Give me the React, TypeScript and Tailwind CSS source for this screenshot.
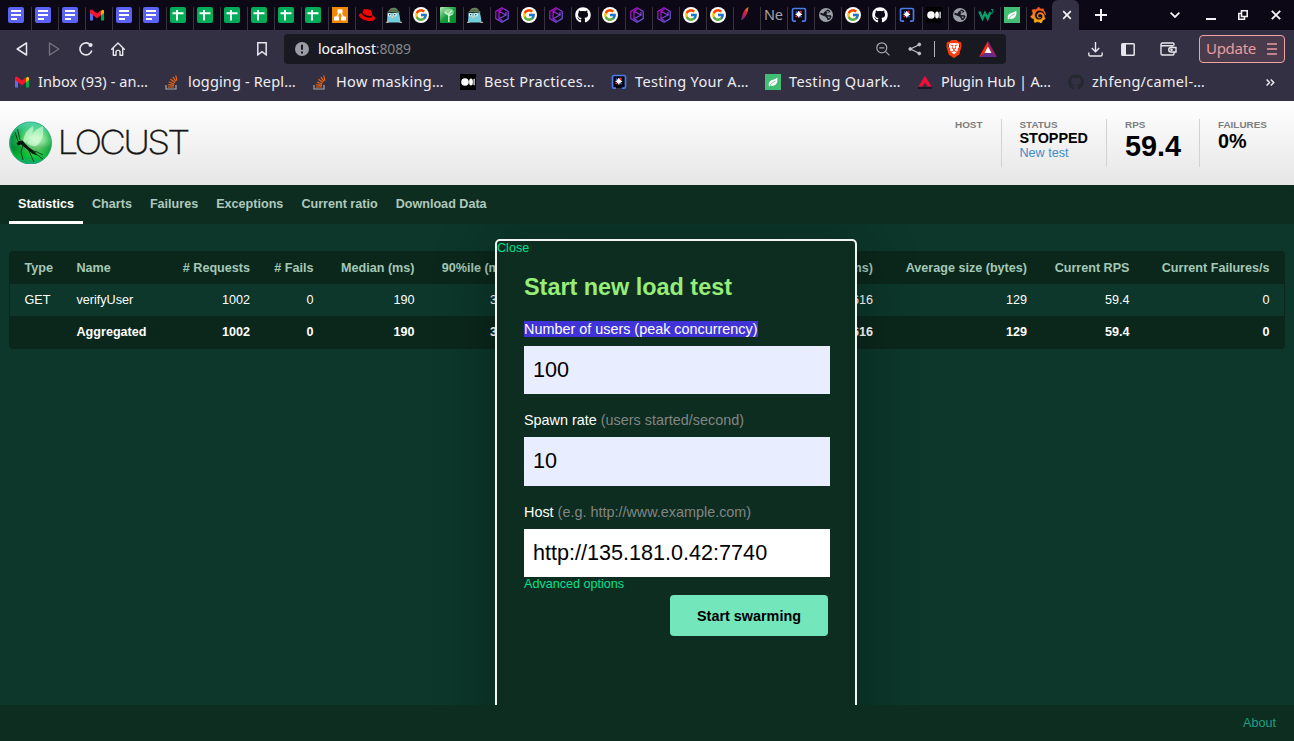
import type { ReactNode } from "react";
import { FaRedhat, FaGithub } from "react-icons/fa";
import { FcGoogle } from "react-icons/fc";
import { SiBrave, SiGrafana } from "react-icons/si";

/* ---------- favicons ---------- */

const Docs = () => (
  <svg width="16" height="16" viewBox="0 0 16 16">
    <rect width="16" height="16" rx="2" fill="#5b62f4" />
    <path d="M3 4h10M3 8h10M3 12h6" stroke="#fff" strokeWidth="1.8" />
  </svg>
);

const Sheets = () => (
  <svg width="16" height="16" viewBox="0 0 16 16">
    <rect width="16" height="16" rx="2" fill="#00ac57" />
    <path d="M2.5 6.2h11M7 3v10.5" stroke="#fff" strokeWidth="1.9" />
  </svg>
);

const Gmail = () => (
  <svg width="16" height="16" viewBox="0 0 16 16">
    <path d="M1 5v8.5h3V7.5z" fill="#5b6cf0" />
    <path d="M15 5v8.5h-3V7.5z" fill="#00ac47" />
    <path d="M12 4l1.5-1.2L15 3.5V6l-3 2.3z" fill="#ffba00" />
    <path d="M1 6V3.6Q2.2 1.8 4 3.2l4 3.4 4-3.4v5L8 11.2 4 8.2z" fill="#f5152f" />
  </svg>
);

const DrawIo = () => (
  <svg width="16" height="16" viewBox="0 0 16 16">
    <rect width="16" height="16" fill="#f08705" />
    <path d="M8 4L4.3 11M8 4l3.7 7" stroke="#fff" strokeWidth="1.3" />
    <rect x="5.5" y="2.3" width="5" height="4" rx=".6" fill="#fff" />
    <rect x="2" y="9.5" width="5" height="4" rx=".6" fill="#fff" />
    <rect x="9" y="9.5" width="5" height="4" rx=".6" fill="#fff" />
  </svg>
);

const Gopher = () => (
  <svg width="16" height="16" viewBox="0 0 16 16">
    <path d="M1.500 6h11.500l.8 4 .7 5.500H1z" fill="#74cddd" />
    <path d="M.5 5.500Q3 4.800 3.800 2 6 .2 9 .8q2.500.4 3 2.700l1.500 1.200-.3 1.600Q8 4.800.5 5.500z" fill="#65805a" />
    <path d="M4 3.800q4-1.200 8 .4" stroke="#3c5238" strokeWidth=".7" fill="none" />
    <circle cx="3.500" cy="7.700" r="1.700" fill="#e8fbff" />
    <circle cx="9" cy="7.700" r="1.800" fill="#e8fbff" />
    <circle cx="3.700" cy="7.800" r=".7" fill="#172226" />
    <circle cx="8.800" cy="7.800" r=".7" fill="#172226" />
    <path d="M5.300 9h2v2h-2z" fill="#e3cba6" />
    <path d="M0 15.300h2.500M13.500 15.300H16" stroke="#e3cba6" />
  </svg>
);

const Google = () => (
  <span className="flex size-4 items-center justify-center rounded-full bg-white">
    <FcGoogle size={14} />
  </span>
);

const GreenTree = () => (
  <svg width="16" height="16" viewBox="0 0 16 16">
    <defs>
      <linearGradient id="treeBg" x2="1" y2="1">
        <stop offset="0" stopColor="#b5eeb8" />
        <stop offset=".5" stopColor="#159d3f" />
        <stop offset="1" stopColor="#008c24" />
      </linearGradient>
    </defs>
    <rect width="16" height="16" rx="1" fill="url(#treeBg)" />
    <path d="M8.800 15V7M8.500 8L5 5M8.500 7l3.500-3.500M8.500 9l4-2" stroke="#e4fbe2" strokeWidth="1.300" />
    <ellipse cx="9" cy="5" rx="5" ry="3.200" fill="#c0efc0" opacity=".6" />
  </svg>
);

const PurpleHex = () => (
  <svg width="16" height="16" viewBox="0 0 16 16" fill="none" strokeWidth="1.2">
    <defs>
      <linearGradient id="hexStroke" x2="1" y2="1">
        <stop offset="0" stopColor="#b900c8" />
        <stop offset="1" stopColor="#5b68e8" />
      </linearGradient>
    </defs>
    <g stroke="url(#hexStroke)">
      <path d="M8 .8l6.200 3.600v7.200L8 15.200 1.800 11.600V4.400z" />
      <path d="M5 4.300L12 8l-7 3.700zM5 4.300L8.500 2.300M12 8V5M5 11.700l3.500 2" />
    </g>
  </svg>
);

const Feather = () => (
  <svg width="16" height="16" viewBox="0 0 16 16">
    <defs>
      <linearGradient id="quill" x1="1" y1="0" x2="0" y2="1">
        <stop offset="0" stopColor="#f79a23" />
        <stop offset=".4" stopColor="#e2223e" />
        <stop offset="1" stopColor="#5c2a86" />
      </linearGradient>
    </defs>
    <path d="M11.500 0Q8 1.500 6 6L4 13l1 0Q10.500 9 11.500 0z" fill="url(#quill)" />
  </svg>
);

const Bracket = () => (
  <svg width="16" height="16" viewBox="0 0 16 16">
    <rect x="2" y="2" width="12" height="12" fill="#08070d" />
    <path d="M5 14.200H2.800Q1.500 14.200 1.500 12.500V3Q1.500 1.500 3 1.500h10q1.500 0 1.500 1.500v9.500q0 1.700-1.300 1.700H11" fill="none" stroke="#4a7be8" strokeWidth="1.700" />
    <circle cx="7.800" cy="7.300" r="2.300" fill="#fff" />
    <path d="M7.800 4v6.600M4.500 7.300h6.600" stroke="#fff" strokeWidth="1.200" />
    <path d="M9 4.200l1.500 1.500M4.700 9.800l1.300-1" stroke="#f03058" strokeWidth="1.700" />
    <path d="M5 4.500l1.200 1.200M9.500 9.300l1 1" stroke="#4177ea" strokeWidth="1.300" />
  </svg>
);

const Globe = () => (
  <svg width="16" height="16" viewBox="0 0 16 16">
    <circle cx="8" cy="8" r="7" fill="#9aa0a6" />
    <path d="M9.500 2.400q2 .6 3 2.200-1.500 1.600-2.700 1.400-1 .3-1.500 1.500l1.500.8 2.500-.4 1.300 1.500q-.8 2.300-2.600 3.500Q9 13.500 9 11.500 8 9.300 5.800 9L2.300 7.600l.3-1.800 3 .8Q6 4.500 9.500 2.400z" fill="#191724" />
    <path d="M8.300 4.500l2-.5.500 1.300-1.500.8zM9.500 9.500l2.300.3-.8 2z" fill="#9aa0a6" />
  </svg>
);

const Medium = () => (
  <svg width="16" height="16" viewBox="0 0 16 16">
    <rect width="16" height="16" fill="#000" />
    <circle cx="5" cy="8" r="3.800" fill="#fff" />
    <ellipse cx="11" cy="8" rx="1.900" ry="3.600" fill="#fff" />
    <rect x="13.500" y="4.800" width="1.200" height="6.400" fill="#fff" />
  </svg>
);

const W3 = () => (
  <svg width="16" height="16" viewBox="0 0 16 16" fill="none" stroke="#04a06a">
    <path d="M1.300 4.500l3.200 7 2.500-5.500 2.700 5.500 2.700-6.500" strokeWidth="2.400" />
    <path d="M13 2.500h2.200l-1.100 1.700q1.400.1 1.100 1.300-.5 1-2.200.5" strokeWidth=".9" />
  </svg>
);

const Leaf = () => (
  <svg width="16" height="16" viewBox="0 0 16 16">
    <rect width="16" height="16" fill="#42bd74" />
    <path d="M12.300 3.500Q13.300 10.500 8.500 11.800q-2 .3-3-.6l-.9 1.300-.8-.5Q3 7 7.500 5.900q3-.4 4.800-2.400z" fill="#fff" />
    <path d="M5 11.200Q7 8.300 10.500 7" stroke="#42bd74" strokeWidth=".7" fill="none" />
  </svg>
);

const Grafana = () => (
  <span className="block size-4">
    <svg width="0" height="0" className="absolute">
      <linearGradient id="grafanaFill" x2="0" y2="1">
        <stop offset="0" stopColor="#f04a28" />
        <stop offset="1" stopColor="#fcb913" />
      </linearGradient>
    </svg>
    <SiGrafana size={16} fill="url(#grafanaFill)" stroke="url(#grafanaFill)" strokeWidth="0.900" />
  </span>
);

const Stack = () => (
  <svg width="16" height="16" viewBox="0 0 16 16" fill="none">
    <path d="M2 11v4h10v-4" stroke="#a9a9ac" strokeWidth="1.200" />
    <path d="M4 13h6M4.200 10.700l5.800.7M4.800 8l5.500 2M6.400 5.300l4.600 3.300M8.900 3l3 4.300M11.800 1.500l1 5.200" stroke="#f2670c" strokeWidth="1.200" />
  </svg>
);

const Bat = () => (
  <svg width="18" height="16" viewBox="0 0 18 16">
    <path d="M9 0L0 16l9-5.500z" fill="#ff2a08" />
    <path d="M9 0l9 16-9-5.500z" fill="#9e1f63" />
    <path d="M0 16h18l-9-6z" fill="#662d91" />
    <path d="M9 5.500l3.500 6.500h-7z" fill="#fff" />
  </svg>
);

const RedTriangle = () => (
  <svg width="16" height="16" viewBox="0 0 16 16">
    <path d="M8 1.800L1.500 12.500h4L8 8.500l2.500 4h4z" fill="#f50d35" />
    <path d="M1 14h14" stroke="#171520" strokeWidth="1.600" />
  </svg>
);

const RedHat = () => <FaRedhat size={16} color="#f00500" />;
const GitHubLight = () => <FaGithub size={16} color="#fff" />;
const GitHubDark = () => <FaGithub size={16} color="#24292f" />;
const NeText = () => (
  <span className="-mt-px block w-[22px] shrink-0 text-[14.500px] leading-4 tracking-[-0.3px] text-[#a5a3ad]">Ne</span>
);

const tabs: (() => ReactNode)[] = [
  Docs, Docs, Docs, Gmail, Docs, Docs,
  Sheets, Sheets, Sheets, Sheets, Sheets, Sheets,
  DrawIo, RedHat, Gopher, Google, GreenTree, Gopher, PurpleHex, Google,
  PurpleHex, GitHubLight, Google, PurpleHex, PurpleHex, Google, Google, Feather,
  NeText, Bracket, Globe, Google, GitHubLight, Bracket,
];
const narrowTabs: (() => ReactNode)[] = [Medium, Globe, W3, Leaf, Grafana];

function TabStrip() {
  return (
    <div className="flex h-[30px] bg-[#0c0815] pl-[5px]">
      {tabs.map((Icon, i) => (
        <div key={i} className="flex h-[30px] w-[27px] shrink-0 items-end">
          <div className="flex h-[23px] w-[27px] justify-start border-r border-[#36333c] pl-[3px]"><Icon /></div>
        </div>
      ))}
      {narrowTabs.map((Icon, i) => (
        <div key={i} className="flex h-[30px] w-[26px] shrink-0 items-end">
          <div className={i === 4 ? "flex h-[23px] w-[26px] pl-[3px]" : "flex h-[23px] w-[26px] border-r border-[#36333c] pl-[3px]"}><Icon /></div>
        </div>
      ))}
      <div className="-ml-px flex h-[30px] w-[27px] shrink-0 items-center justify-center rounded-t-md bg-[#343043] pl-0.5">
        <svg width="10" height="10" viewBox="0 0 10 10" stroke="#f3f2f6" strokeWidth="1.700"><path d="M1.200 1.200l7.600 7.600M8.800 1.200L1.200 8.800" /></svg>
      </div>
      <div className="flex flex-1 items-center text-[#f3f2f6]">
        <svg className="ml-4" width="12" height="12" viewBox="0 0 12 12" stroke="currentColor" strokeWidth="2"><path d="M6 0v12M0 6h12" /></svg>
        <svg className="ml-[63px]" width="10" height="6" viewBox="0 0 10 6" fill="none" stroke="currentColor" strokeWidth="1.800"><path d="M.6.700L5 5 9.400.7" /></svg>
        <svg className="mt-2 ml-[26px]" width="10" height="2"><rect width="10" height="2" fill="currentColor" /></svg>
        <svg className="ml-[22px]" width="10" height="10" viewBox="0 0 10 10" fill="none" stroke="currentColor" strokeWidth="1.600"><path d="M3.500.8h5.700v5.700H3.500zM3 3.500H.8v5.700h5.700V7" /></svg>
        <svg className="ml-[23px]" width="10" height="10" viewBox="0 0 10 10" stroke="currentColor" strokeWidth="1.900"><path d="M.8.8l8.400 8.400M9.200.8L.8 9.200" /></svg>
      </div>
    </div>
  );
}

function Toolbar() {
  return (
    <div className="flex h-[38px] items-center text-[#e8e6ed]">
      <svg className="ml-4" width="12" height="14" viewBox="0 0 12 14" fill="none" stroke="currentColor" strokeWidth="1.500" strokeLinejoin="round"><path d="M10.500 1v12L1.200 7z" /></svg>
      <svg className="ml-5" width="12" height="14" viewBox="0 0 12 14" fill="none" stroke="#77747f" strokeWidth="1.300" strokeLinejoin="round"><path d="M1.500 1v12L10.800 7z" /></svg>
      <svg className="ml-[19px]" width="14" height="14" viewBox="0 0 14 14" fill="none" stroke="currentColor" strokeWidth="1.600"><path d="M10 1.700A6 6 0 1 0 12.800 8.500" /><circle cx="11.500" cy="3" r="2.100" fill="currentColor" stroke="none" /></svg>
      <svg className="ml-[18px]" width="14" height="14" viewBox="0 0 14 14" fill="none" stroke="currentColor" strokeWidth="1.400" strokeLinejoin="round" strokeLinecap="round"><path d="M.7 7.200L7 1l6.300 6.200M2.300 6v7.200H5V9.500q2-2.800 4 0v3.700h2.700V6" /></svg>
      <svg className="ml-[132px]" width="10" height="14" viewBox="0 0 10 14" fill="none" stroke="currentColor" strokeWidth="1.500"><path d="M.8.800h8.400v12L5 9.700.8 12.800z" /></svg>
      <div className="ml-[17px] flex h-[30px] w-[722px] items-center rounded-[4px] bg-[#191a21]">
        <svg className="ml-[11px]" width="14" height="14" viewBox="0 0 14 14"><circle cx="7" cy="7" r="7" fill="#9a9da5" /><path d="M7 2.800v5M7 9.500v2" stroke="#191a21" strokeWidth="2" /></svg>
        <span className="ml-[9px] text-[14px] leading-5 tracking-[-0.15px] text-white">localhost<span className="text-[#85868d]">:8089</span></span>
        <svg className="ml-auto" width="14" height="14" viewBox="0 0 14 14" fill="none" stroke="#aaa9b0" strokeWidth="1.200"><circle cx="5.800" cy="5.800" r="5" /><path d="M9.400 9.400l4 4M3.300 5.800h5" /></svg>
        <svg className="ml-[18px]" width="14" height="14" viewBox="0 0 14 14" fill="#c4c3c9" stroke="#c4c3c9"><path d="M11.500 2.500L2.500 7l9 4.500" fill="none" strokeWidth="1.200" /><circle cx="11.300" cy="2.500" r="1.400" /><circle cx="2.300" cy="7" r="1.400" /><circle cx="11.300" cy="11.500" r="1.400" /></svg>
        <div className="ml-3 h-4 w-px bg-[#b4b3ba]" />
        <span className="relative ml-[10px] flex h-[18px] w-[18px] items-center justify-center">
          <span className="absolute h-[12px] w-[10px] bg-white" />
          <SiBrave className="relative" size={18} color="#fb3b0b" />
        </span>
        <span className="mr-[9px] ml-[16px]"><Bat /></span>
      </div>
      <svg className="ml-[82px]" width="15" height="15" viewBox="0 0 15 15" fill="none" stroke="currentColor" strokeWidth="1.400"><path d="M7.500 0v9.500M3.800 6l3.700 3.700L11.200 6M.8 10.500v2q0 1.500 1.500 1.500h10.400q1.500 0 1.500-1.500v-2" /></svg>
      <svg className="ml-[18px]" width="14" height="13" viewBox="0 0 14 13"><rect x=".8" y=".8" width="12.400" height="11.400" rx=".8" fill="none" stroke="currentColor" strokeWidth="1.500" /><rect x="1" y="1" width="4" height="11" fill="currentColor" /></svg>
      <svg className="ml-[25px]" width="17" height="14" viewBox="0 0 17 14" fill="none" stroke="currentColor" strokeWidth="1.400"><path d="M14 3.500V2.300Q14 1 12.700 1H2.500Q1 1 1 2.500v9Q1 13 2.500 13h10.200q1.300 0 1.300-1.300V10.500M1 3.800h12.500M16 5.500v4.500h-5q-2.300 0-2.300-2.200T11 5.500z" /><circle cx="11.500" cy="7.800" r=".6" /></svg>
      <div className="ml-[22px] flex h-[28px] w-[86px] items-center rounded-[4px] border border-[#f2a3a5] bg-[#493b4c] pl-[6px] text-[#e99c9f]">
        <span className="w-[53px] pb-0.5 text-[15px] leading-5 tracking-[-0.3px]">Update</span>
        <svg className="ml-2" width="10" height="12" viewBox="0 0 10 12" stroke="currentColor" strokeWidth="1.500"><path d="M0 1h10M0 6h10M0 11h10" /></svg>
      </div>
    </div>
  );
}

const bookmarks: { icon: () => ReactNode; label: string; width: string; spacing: string }[] = [
  { icon: Gmail, label: "Inbox (93) - an…", width: "w-[150px]", spacing: "tracking-[0.08px]" },
  { icon: Stack, label: "logging - Repl…", width: "w-[148px]", spacing: "tracking-[0.15px]" },
  { icon: Stack, label: "How masking…", width: "w-[148px]", spacing: "tracking-[0.33px]" },
  { icon: Medium, label: "Best Practices…", width: "w-[151px]", spacing: "tracking-[0.35px]" },
  { icon: Bracket, label: "Testing Your A…", width: "w-[154px]", spacing: "tracking-[0.35px]" },
  { icon: Leaf, label: "Testing Quark…", width: "w-[152px]", spacing: "tracking-[0.38px]" },
  { icon: RedTriangle, label: "Plugin Hub | A…", width: "w-[151px]", spacing: "tracking-[-0.12px]" },
  { icon: GitHubDark, label: "zhfeng/camel-…", width: "w-[150px]", spacing: "tracking-[0.3px]" },
];

function Bookmarks() {
  return (
    <div className="flex h-[33px] items-center pb-[5px] pl-[14px] text-[#eeedf2]">
      {bookmarks.map(({ icon: Icon, label, width, spacing }) => (
        <div key={label} className={`flex shrink-0 items-center gap-2 ${width}`}>
          <Icon />
          <span className={`-mt-[3px] text-[14.5px] leading-5 whitespace-nowrap ${spacing}`}>{label}</span>
        </div>
      ))}
      <svg className="ml-[48px]" width="9" height="7" viewBox="0 0 9 7" fill="none" stroke="currentColor" strokeWidth="1.500"><path d="M.6.500L3.500 3.500.6 6.500M4.800.5l2.900 3-2.900 3" /></svg>
    </div>
  );
}

/* ---------- Locust page ---------- */

function Logo() {
  return (
    <svg width="184" height="46" viewBox="0 0 184 46">
      <defs>
        <radialGradient id="orb" cx=".62" cy=".45" r=".68">
          <stop offset="0" stopColor="#e8fbe2" />
          <stop offset=".3" stopColor="#8be596" />
          <stop offset=".62" stopColor="#0fb03f" />
          <stop offset=".85" stopColor="#058f43" />
          <stop offset="1" stopColor="#45cdb2" />
        </radialGradient>
        <linearGradient id="orbShade" x2="0" y2="1">
          <stop offset="0" stopColor="#60dfc4" stopOpacity=".85" />
          <stop offset=".35" stopColor="#60dfc4" stopOpacity="0" />
          <stop offset=".6" stopColor="#047b12" stopOpacity=".35" />
          <stop offset=".8" stopColor="#05ce30" stopOpacity=".5" />
          <stop offset="1" stopColor="#18a67a" />
        </linearGradient>
      </defs>
      <circle cx="22.500" cy="25" r="21" fill="url(#orb)" />
      <circle cx="22.500" cy="25" r="21" fill="url(#orbShade)" stroke="#28a276" strokeWidth=".8" />
      <path d="M15 23Q17 12 25 8q2 5-7 17zM19 25Q23 13 35 8q2 14-7 20-5 1-9-3z" fill="#dbffd9" opacity=".6" />
      <path d="M8.500 25.500l2-2.500 4-.5 2.500 3 4 4 6 4 2 4-5-2-6-5-5-4-3 1z" fill="#07170b" />
      <path d="M10 23L7 14M12 22L9.500 11M15 27l-2 7 2 8M20 31l6 13M24 33l11 8M27 33l8 4" stroke="#123619" strokeWidth=".9" fill="none" />
      <text x="49.500" y="36" fontFamily="Inter, sans-serif" fontWeight="200" fontSize="33" letterSpacing="-2.500" textLength="130" lengthAdjust="spacingAndGlyphs" fill="#151515" stroke="#151515" strokeWidth=".3">LOCUST</text>
    </svg>
  );
}

const Label = ({ children }: { children: ReactNode }) => (
  <div className="text-[9.9px] leading-[12px] font-bold text-[#7d7d7d]">{children}</div>
);

function Header() {
  return (
    <header className="flex h-[84px] justify-between bg-linear-to-b from-white to-[#e6e6e6] pr-[9px]">
      <div className="pt-[17px] pl-2"><Logo /></div>
      <div className="mt-[18px] flex h-12 text-[12.6px] leading-[15px] text-black">
        <div className="w-[64px] pl-[18px]"><Label>HOST</Label></div>
        <div className="w-[105px] border-l border-[#d2d2d2] pl-[17.500px]">
          <Label>STATUS</Label>
          <div className="text-[14.4px] leading-[14px] font-bold">STOPPED</div>
          <div className="pt-px text-[#3d8cc8]">New test</div>
        </div>
        <div className="w-[93px] border-l border-[#d2d2d2] pl-[18px]">
          <Label>RPS</Label>
          <div className="text-[28.800px] leading-[30px] font-bold">59.4</div>
        </div>
        <div className="w-[86px] border-l border-[#d2d2d2] pl-[18px]">
          <Label>FAILURES</Label>
          <div className="text-[19.8px] leading-[20px] font-bold">0%</div>
        </div>
      </div>
    </header>
  );
}

const sections = ["Statistics", "Charts", "Failures", "Exceptions", "Current ratio", "Download Data"];

const columns = [
  { title: "Type", width: "w-[52px]", get: "GET", total: "" },
  { title: "Name", width: "w-[103px]", get: "verifyUser", total: "Aggregated" },
  { title: "# Requests", width: "w-[100px]", get: "1002", total: "1002" },
  { title: "# Fails", width: "w-[63.5px]", get: "0", total: "0" },
  { title: "Median (ms)", width: "w-[101px]", get: "190", total: "190" },
  { title: "90%ile (ms)", width: "w-[96.5px]", get: "390", total: "390" },
  { title: "", width: "w-[282px]", get: "", total: "" },
  { title: "Max (ms)", width: "w-[80px]", get: "616", total: "616" },
  { title: "Average size (bytes)", width: "w-[154px]", get: "129", total: "129" },
  { title: "Current RPS", width: "w-[102.5px]", get: "59.4", total: "59.4" },
  { title: "Current Failures/s", width: "w-[140px]", get: "0", total: "0" },
];

type CellKey = "title" | "get" | "total";

function Row({ field, className }: { field: CellKey; className: string }) {
  return (
    <div className={`flex h-8 items-center ${className}`}>
      {columns.map((c, i) => (
        <div key={i} className={`shrink-0 whitespace-nowrap ${c.width} ${i < 2 ? "pl-[14.500px]" : "pr-[15px] text-right"}`}>{c[field]}</div>
      ))}
    </div>
  );
}

function StatsTable() {
  return (
    <div className="mx-[9px] mt-[27px] overflow-hidden rounded-[3px] border border-[#0b271c] text-[12.6px] text-white">
      <Row field="title" className="bg-[#0b271c] font-bold text-[#a4c8b6]" />
      <Row field="get" className="" />
      <Row field="total" className="bg-[#0b271c] font-bold" />
    </div>
  );
}

function StartDialog() {
  return (
    <div className="absolute top-[15px] left-[495px] h-[520px] w-[362px] rounded-[5px] border-2 border-[#f2f4f3] bg-[#0d2d21] text-[14.4px] text-white shadow-[0_0_60px_rgba(0,0,0,0.3)]">
      <div className="h-[15px] text-[12.6px] leading-[14px] text-[#05e08d]">Close</div>
      <div className="flex flex-col pr-[25px] pl-[27px]">
        <h2 className="mt-[17px] h-[28px] text-[23.4px] leading-[28px] font-bold text-[#98ec78]">Start new load test</h2>
        <div className="mt-5 leading-4"><span className="bg-[#4034d8]">Number of users (peak concurrency)</span></div>
        <div className="mt-[9px] h-12 bg-[#e8eeff] pl-[9px] text-[21.6px] leading-[48px] text-black">100</div>
        <div className="mt-[18px] leading-4">Spawn rate <span className="text-[#838584]">(users started/second)</span></div>
        <div className="mt-[9px] h-[49px] bg-[#e8eeff] pl-[9px] text-[21.6px] leading-[48px] text-black">10</div>
        <div className="mt-[18px] leading-4">Host <span className="text-[#838584]">(e.g. http://www.example.com)</span></div>
        <div className="mt-[9px] h-12 bg-white pl-[9px] text-[21.6px] leading-[48px] text-black">http://135.181.0.42:7740</div>
        <div className="h-[18px] text-[12.6px] leading-[14px] text-[#05e08d]">Advanced options</div>
        <button className="mr-[2px] h-[41px] w-[158px] self-end rounded-[4px] bg-[#74e6bb] pt-0.5 font-bold text-black">Start swarming</button>
      </div>
    </div>
  );
}

export default function App() {
  return (
    <div className="flex h-[741px] w-[1294px] flex-col overflow-hidden bg-[#0c372a] font-['Liberation_Sans',Arial,sans-serif]">
      <div className="h-[101px] shrink-0 bg-[#343043] font-['Noto_Sans',sans-serif]">
        <TabStrip />
        <Toolbar />
        <Bookmarks />
      </div>
      <Header />
      <nav className="flex h-[39px] shrink-0 bg-[#0d2d21] pl-[9px] text-[12.6px] font-bold text-[#afc8bc]">
        {sections.map((s, i) => (
          <div key={s} className={i === 0 ? "h-[39px] border-b-[3px] border-white px-[9px] pt-3 leading-[15px] text-white" : "px-[9px] pt-3 leading-[15px]"}>{s}</div>
        ))}
      </nav>
      <main className="relative min-h-0 flex-1 overflow-hidden">
        <StatsTable />
        <StartDialog />
      </main>
      <footer className="flex h-9 shrink-0 items-center justify-end bg-[#0d2d21] pr-[18px] text-[12.6px] text-[#1e9f82]">About</footer>
    </div>
  );
}
